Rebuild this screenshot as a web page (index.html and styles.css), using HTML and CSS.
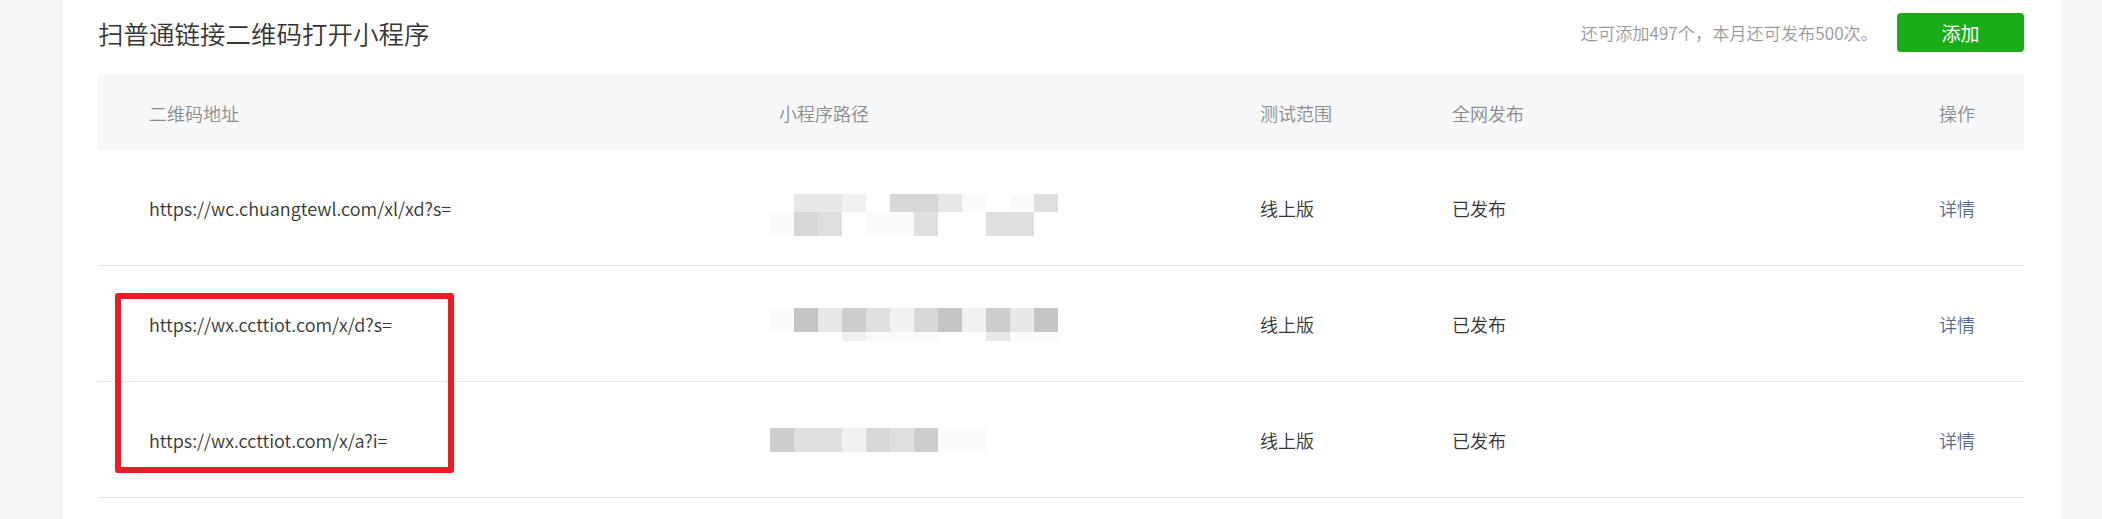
FILE: index.html
```html
<!DOCTYPE html>
<html lang="zh-CN">
<head>
<meta charset="utf-8">
<title>扫普通链接二维码打开小程序</title>
<link rel="stylesheet" href="styles.css">
</head>
<body>
<div class="page">
  <aside class="side side-left"></aside>
  <main class="card">
    <div class="toolbar">
      <h1 class="title">扫普通链接二维码打开小程序</h1>
      <div class="actions">
        <span class="quota">还可添加497个，本月还可发布500次。</span>
        <button class="btn-add" type="button">添加</button>
      </div>
    </div>
    <div class="table">
      <div class="row head">
        <div class="cell">二维码地址</div>
        <div class="cell">小程序路径</div>
        <div class="cell">测试范围</div>
        <div class="cell">全网发布</div>
        <div class="cell">操作</div>
      </div>
      <div class="row">
        <div class="cell">https://wc.chuangtewl.com/xl/xd?s=</div>
        <div class="cell">
          <div class="mosaic m1">
            <span class="k0"></span><span class="k3"></span><span class="k3"></span><span class="k2"></span><span class="k0"></span><span class="k5"></span><span class="k5"></span><span class="k3"></span><span class="k1"></span><span class="k0"></span><span class="k1"></span><span class="k4"></span>
            <span class="k1"></span><span class="k5"></span><span class="k4"></span><span class="k0"></span><span class="k1"></span><span class="k1"></span><span class="k4"></span><span class="k0"></span><span class="k0"></span><span class="k4"></span><span class="k4"></span><span class="k0"></span>
          </div>
        </div>
        <div class="cell">线上版</div>
        <div class="cell">已发布</div>
        <div class="cell"><a class="link" href="#">详情</a></div>
      </div>
      <div class="row">
        <div class="cell">https://wx.ccttiot.com/x/d?s=</div>
        <div class="cell">
          <div class="mosaic m2">
            <span class="k1"></span><span class="k7"></span><span class="k3"></span><span class="k6"></span><span class="k4"></span><span class="k2"></span><span class="k5"></span><span class="k7"></span><span class="k2"></span><span class="k6"></span><span class="k3"></span><span class="k7"></span>
            <span class="k0"></span><span class="k0"></span><span class="k0"></span><span class="k2"></span><span class="k1"></span><span class="k1"></span><span class="k1"></span><span class="k0"></span><span class="k0"></span><span class="k3"></span><span class="k1"></span><span class="k1"></span>
          </div>
        </div>
        <div class="cell">线上版</div>
        <div class="cell">已发布</div>
        <div class="cell"><a class="link" href="#">详情</a></div>
      </div>
      <div class="row">
        <div class="cell">https://wx.ccttiot.com/x/a?i=</div>
        <div class="cell">
          <div class="mosaic m3">
            <span class="k6"></span><span class="k4"></span><span class="k4"></span><span class="k2"></span><span class="k5"></span><span class="k4"></span><span class="k6"></span><span class="k1"></span><span class="k1"></span>
          </div>
        </div>
        <div class="cell">线上版</div>
        <div class="cell">已发布</div>
        <div class="cell"><a class="link" href="#">详情</a></div>
      </div>
      <div class="highlight"></div>
    </div>
  </main>
  <aside class="side side-right"></aside>
</div>
</body>
</html>
```

FILE: styles.css
```css
* { box-sizing: border-box; }

html, body {
  margin: 0;
  padding: 0;
  height: 100%;
  overflow: hidden;
}

body {
  font-family: "Noto Sans CJK SC", "Noto Sans", sans-serif;
  font-size: 18px;
  font-weight: 350;
  color: #353535;
  background: #f6f7f9;
}

.page {
  display: flex;
  height: 519px;
}

.side {
  background: #f6f7f9;
}

.side-left {
  width: 62px;
  border-right: 1px solid #ebedf0;
}

.side-right {
  width: 40px;
  border-left: 1px solid #eef0f2;
}

.card {
  flex: 1;
  background: #fff;
  padding: 13px 38px 0 36px;
}

.toolbar {
  display: flex;
  align-items: center;
  justify-content: space-between;
  height: 39px;
  margin-bottom: 23px;
}

.title {
  margin: 0;
  font-size: 25.5px;
  font-weight: 350;
  color: #353535;
}

.actions {
  display: flex;
  align-items: center;
  gap: 19px;
}

.quota {
  font-size: 17.2px;
  color: #9a9a9a;
}

.btn-add {
  width: 127px;
  height: 39px;
  border: 0;
  border-radius: 4px;
  background: #1aad19;
  color: #fff;
  font-family: inherit;
  font-weight: 400;
  font-size: 19px;
  padding: 0;
}

.table {
  position: relative;
}

.row {
  display: grid;
  grid-template-columns: 630px 481px 192px 1fr 136px;
  align-items: center;
  height: 116px;
  border-bottom: 1px solid #e7e7e7;
}

.row.head {
  height: 75px;
  background: #f6f7f9;
  border-bottom: 0;
  color: #8d8d8d;
}

.cell {
  padding-left: 51px;
  white-space: nowrap;
}

.link {
  color: #576b95;
  text-decoration: none;
}

.mosaic {
  display: grid;
  grid-template-columns: repeat(12, 24px);
  margin-left: -9px;
}

.mosaic span { display: block; }

.m1 {
  grid-template-rows: 18px 24px;
  margin-top: 15px;
}

.m2 {
  grid-template-rows: 24px 9px;
  margin-top: 2px;
}

.m3 {
  grid-template-columns: repeat(9, 24px);
  grid-template-rows: 24px;
}

.k0 { background: transparent; }
.k1 { background: #fafafa; }
.k2 { background: #f1f1f1; }
.k3 { background: #e7e7e7; }
.k4 { background: #dfdfdf; }
.k5 { background: #d7d7d7; }
.k6 { background: #cdcdcd; }
.k7 { background: #c5c5c5; }

.highlight {
  position: absolute;
  left: 17px;
  top: 218px;
  width: 339px;
  height: 180px;
  border: 6px solid #ed1c24;
  border-radius: 3px;
  pointer-events: none;
}
```
